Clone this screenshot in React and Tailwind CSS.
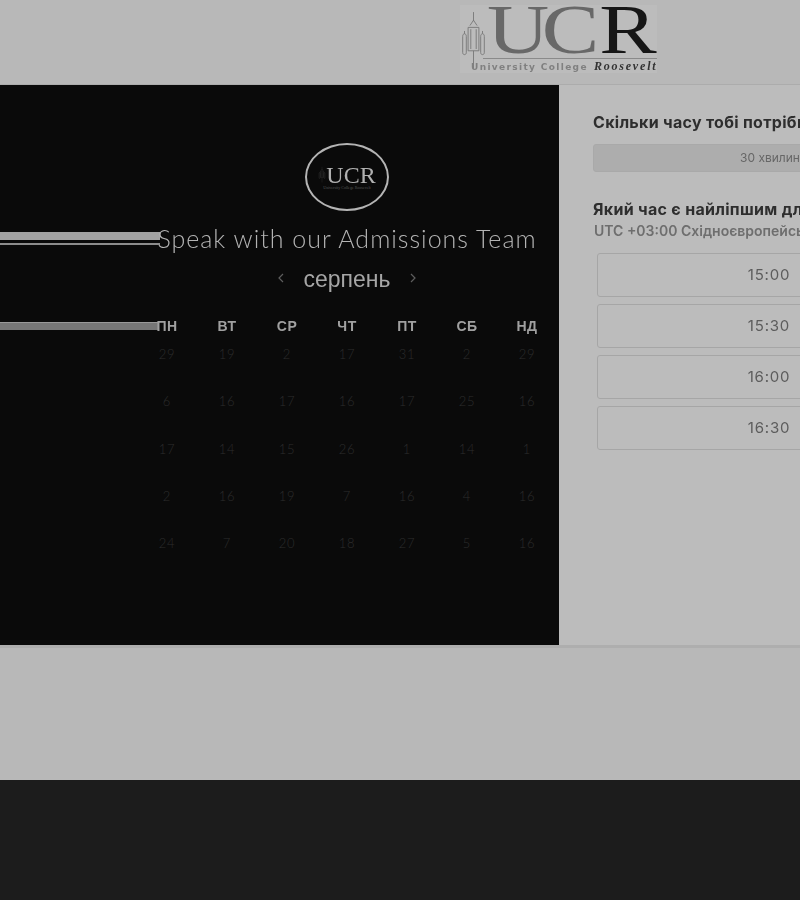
const weekdays = ["ПН", "ВТ", "СР", "ЧТ", "ПТ", "СБ", "НД"];
const days = [
  29, 19, 2, 17, 31, 2, 29,
  6, 16, 17, 16, 17, 25, 16,
  17, 14, 15, 26, 1, 14, 1,
  2, 16, 19, 7, 16, 4, 16,
  24, 7, 20, 18, 27, 5, 16,
];
const slots = ["15:00", "15:30", "16:00", "16:30"];

function Tower({ className }) {
  return (
    <svg viewBox="0 0 30 68" className={className} fill="none" stroke="#777" strokeWidth="1">
      <path d="M15 3v10M11 18l4-6 4 6M9 20h12M9 20v26M21 20v26M12 22v22M18 22v22M9 46h12" />
      <path d="M3 30c0-4 4-4 4 0v18c0 3-4 3-4 0zM23 30c0-4 4-4 4 0v18c0 3-4 3-4 0z" />
      <path d="M5 27v-3M25 27v-3M15 46v20" />
    </svg>
  );
}

function Chevron({ left }) {
  return (
    <svg viewBox="0 0 8 10" className="w-[8px] h-[10px] mt-[-2px]" fill="none" stroke="#5e5e5e" strokeWidth="1.2">
      <path d={left ? "M6 1 2 5l4 4" : "M2 1l4 4-4 4"} />
    </svg>
  );
}

function Logo() {
  return (
    <div className="relative w-[197px] h-[68px] bg-[#bcbcbc]">
      <Tower className="absolute left-0 top-[1px] w-[27px] h-[68px]" />
      <div className="absolute left-[27px] top-0 flex h-[50px] origin-left scale-x-[1.23] font-['Liberation_Serif',serif] text-[70px] leading-[50px] blur-[0.4px]">
        <span className="text-[#686868]">U</span>
        <span className="text-[#686868] ml-[-6px]">C</span>
        <span className="text-[#161616]">R</span>
      </div>
      <div className="absolute left-[23px] right-0 top-[53px] h-[1px] bg-[#8a8a8a]" />
      <div className="absolute left-[11px] top-[55px] flex items-baseline gap-[6px] whitespace-nowrap blur-[0.3px]">
        <span className="font-['DejaVu_Sans',sans-serif] text-[9px] leading-[12px] font-bold tracking-[1.35px] text-[#808080]">University College</span>
        <span className="font-['Liberation_Serif',serif] text-[12px] leading-[12px] font-bold italic tracking-[1.8px] text-[#333]">Roosevelt</span>
      </div>
    </div>
  );
}

function CircleLogo() {
  return (
    <div className="w-[84px] h-[68px] rounded-[50%] border-[2px] border-[#b4b4b4] flex flex-col items-center justify-center">
      <div className="flex items-center">
        <Tower className="w-[8px] h-[17px] opacity-60" />
        <span className="font-['Liberation_Serif',serif] text-[24px] leading-[20px] text-[#b0b0b0] blur-[0.3px]">UCR</span>
      </div>
      <span className="font-['Liberation_Serif',serif] text-[4px] leading-[5px] text-[#555] whitespace-nowrap">University College Roosevelt</span>
    </div>
  );
}

function Calendar() {
  return (
    <div className="w-[559px] shrink-0 h-[560px] bg-[#0a0a0a] pl-[137px] pr-[2px] pt-[58px] flex flex-col items-center">
      <CircleLogo />
      <div className="relative w-full mt-[11px] h-[32px] flex items-center justify-center">
        <div className="absolute left-[-137px] top-[10px] w-[160px] h-[8px] bg-[#a2a2a2]" />
        <div className="absolute left-[-137px] top-[21px] w-[160px] h-[2px] bg-[#8c8c8c]" />
        <span className="font-['Lato',sans-serif] font-light text-[25px] tracking-[1px] leading-[32px] text-[#b4b4b4] whitespace-nowrap blur-[0.3px]">
          Speak with our Admissions Team
        </span>
      </div>
      <div className="mt-[12px] h-[26px] flex items-center justify-center gap-[18px] blur-[0.3px]">
        <Chevron left />
        <span className="font-['Liberation_Sans',sans-serif] text-[23px] text-[#a6a6a6] leading-[26px]">серпень</span>
        <Chevron />
      </div>
      <div className="relative w-full mt-[23px]">
        <div className="absolute left-[-137px] top-[7px] w-[158px] h-[8px] bg-[#767676] border-t border-[#999]" />
        <div className="grid grid-cols-7 h-[22px] items-center font-['Liberation_Sans',sans-serif] text-[14px] font-bold tracking-[0.5px] text-[#a0a0a0] text-center blur-[0.3px]">
          {weekdays.map((d) => (
            <span key={d}>{d}</span>
          ))}
        </div>
      </div>
      <div className="w-full mt-[5px] grid grid-cols-7 auto-rows-[47.3px] font-['Lato',sans-serif] font-light text-[13px] tracking-[0.8px] text-[#2c2c2c] text-center">
        {days.map((d, i) => (
          <span key={i} className="h-[24px] leading-[24px]">{d}</span>
        ))}
      </div>
    </div>
  );
}

function Booking() {
  return (
    <div className="w-[420px] shrink-0 h-[560px] bg-[#bcbcbc] pl-[34px] pr-[38px] pt-[28px] font-['Inter',sans-serif]">
      <h2 className="text-[16px] leading-[18px] font-bold tracking-[0.3px] text-[#2e2e2e] whitespace-nowrap blur-[0.3px]">Скільки часу тобі потрібно?</h2>
      <div className="mt-[13px] h-[28px] rounded-[3px] bg-[#adadad] border border-[#a9a9a9] flex items-center justify-center text-[12px] text-[#666] blur-[0.3px]">
        <span className="ml-[6px]">30 хвилин</span>
      </div>
      <h2 className="mt-[28px] text-[16px] leading-[18px] font-bold tracking-[0.3px] text-[#2e2e2e] whitespace-nowrap blur-[0.3px]">Який час є найліпшим для тебе?</h2>
      <p className="mt-[5px] ml-[1px] text-[14px] leading-[16px] font-semibold text-[#6e6e6e] whitespace-nowrap blur-[0.3px]">UTC +03:00 Східноєвропейський літній час</p>
      <div className="mt-[14px] ml-[4px] flex flex-col gap-[7px]">
        {slots.map((s) => (
          <div key={s} className="h-[44px] rounded-[3px] border border-[#a6a6a6] bg-[#bcbcbc] flex items-center justify-center text-[15px] font-normal tracking-[0.8px] text-[#5c5c5c] blur-[0.3px]">
            {s}
          </div>
        ))}
      </div>
    </div>
  );
}

export default function App() {
  return (
    <div className="w-[800px] h-[900px] overflow-hidden flex flex-col bg-[#b8b8b8]">
      <header className="h-[85px] shrink-0 flex pl-[460px] pt-[5px] border-b border-[#acacac]">
        <Logo />
      </header>
      <main className="shrink-0 flex border-b-[3px] border-[#aeaeae] w-[800px] overflow-hidden">
        <Calendar />
        <Booking />
      </main>
      <div className="flex-1" />
      <footer className="h-[120px] shrink-0 bg-[#1c1c1c]" />
    </div>
  );
}
